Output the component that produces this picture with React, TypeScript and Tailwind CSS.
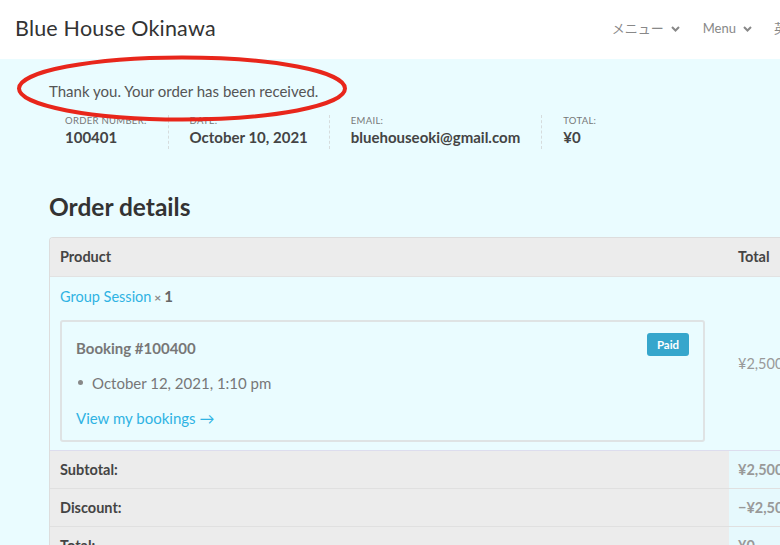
import React from "react";

const font = { fontFamily: '"Lato", "Noto Sans CJK JP", sans-serif' };

function Chevron() {
  return (
    <svg width="9" height="6" viewBox="0 0 9 6" className="ml-[7px]">
      <path d="M1 1l3.5 3.5L8 1" fill="none" stroke="#888" strokeWidth="2" />
    </svg>
  );
}

export default function App() {
  return (
    <div className="relative w-[780px] h-[545px] overflow-hidden bg-[#eafcff]" style={font}>
      <header className="h-[59px] bg-white flex items-center justify-between pl-[15px]">
        <div className="text-[21.5px] text-[#333] tracking-[0.2px] -mt-[2px]">Blue House Okinawa</div>
        <nav className="flex items-center text-[13px] text-[#888] whitespace-nowrap -mr-[20px] -mt-[2px]">
          <span className="flex items-center">メニュー<Chevron /></span>
          <span className="flex items-center ml-[23px]">Menu<Chevron /></span>
          <span className="ml-[22px]">英語</span>
        </nav>
      </header>

      <main className="pl-[49px]">
        <p className="pt-[22px] text-[15px] text-[#555] leading-[20px]">Thank you. Your order has been received.</p>

        <ul className="flex mt-[14px] ml-[16px]">
          {[
            ["ORDER NUMBER:", "100401"],
            ["DATE:", "October 10, 2021"],
            ["EMAIL:", "bluehouseoki@gmail.com"],
            ["TOTAL:", "¥0"],
          ].map(([label, value], i, arr) => (
            <li
              key={label}
              className={`flex flex-col pr-[21px] ${i > 0 ? "pl-[21px]" : ""} ${
                i < arr.length - 1 ? "border-r border-dashed border-[#d6dcdd]" : ""
              } h-[34px]`}
            >
              <span className="text-[9.5px] text-[#777] uppercase leading-[12px] tracking-[0.3px]">{label}</span>
              <strong className="text-[15px] text-[#444] font-bold leading-[21px]">{value}</strong>
            </li>
          ))}
        </ul>

        <h2 className="mt-[43px] text-[24.5px] font-bold text-[#333] leading-[30px]">Order details</h2>

        <div className="mt-[15px] w-[800px] border-l border-t border-[#dddddd] rounded-tl-[4px] overflow-hidden text-[14.5px]">
          <div className="grid grid-cols-[679px_121px] h-[39px] bg-[#ececec] border-b border-[#e2e2e2] font-bold text-[#444]">
            <div className="flex items-center pl-[10px]">Product</div>
            <div className="flex items-center pl-[9px]">Total</div>
          </div>

          <div className="grid grid-cols-[679px_121px] border-b border-[#dde]">
            <div className="pl-[10px] pt-[9px] pb-[8px]">
              <div className="leading-[20px]">
                <a className="text-[#2fb3e3]">Group Session</a>
                <strong className="text-[#888] font-bold text-[12px]"> × <span className="text-[15px] text-[#666]">1</span></strong>
              </div>
              <div className="mt-[12px] w-[645px] h-[122px] border-2 border-[#dfe3e4] rounded-[3px] pl-[14px] pr-[14px] pt-[11px] relative">
                <div className="flex items-start justify-between">
                  <span className="text-[#777] font-bold text-[15px] mt-[4px]">Booking #100400</span>
                  <span className="bg-[#36a6cc] text-white text-[11.5px] font-bold rounded-[3px] w-[42px] h-[23px] flex items-center justify-center">Paid</span>
                </div>
                <div className="flex items-center mt-[12px] text-[#777] text-[15px]">
                  <span className="w-[5px] h-[5px] rounded-full bg-[#888] ml-[2px] mr-[9px]" />
                  October 12, 2021, 1:10 pm
                </div>
                <div className="mt-[13px] text-[#2fb3e3] text-[15px]">View my bookings →</div>
              </div>
            </div>
            <div className="flex items-center pl-[9px] text-[#999]">¥2,500</div>
          </div>

          {[
            ["Subtotal:", "¥2,500"],
            ["Discount:", "−¥2,500"],
            ["Total:", "¥0"],
          ].map(([label, value]) => (
            <div key={label} className="grid grid-cols-[679px_121px] h-[38px] border-b border-[#e0e0e0]">
              <div className="bg-[#ececec] flex items-center pl-[10px] font-bold text-[#444]">{label}</div>
              <div className="bg-[#e6f9fd] flex items-center pl-[9px] font-bold text-[#999]">{value}</div>
            </div>
          ))}
        </div>
      </main>

      <svg className="absolute left-[16px] top-[55px] pointer-events-none" width="332" height="67" viewBox="0 0 332 67">
        <ellipse cx="166" cy="33.5" rx="163" ry="31" fill="none" stroke="#e8261b" strokeWidth="4" />
      </svg>
    </div>
  );
}
